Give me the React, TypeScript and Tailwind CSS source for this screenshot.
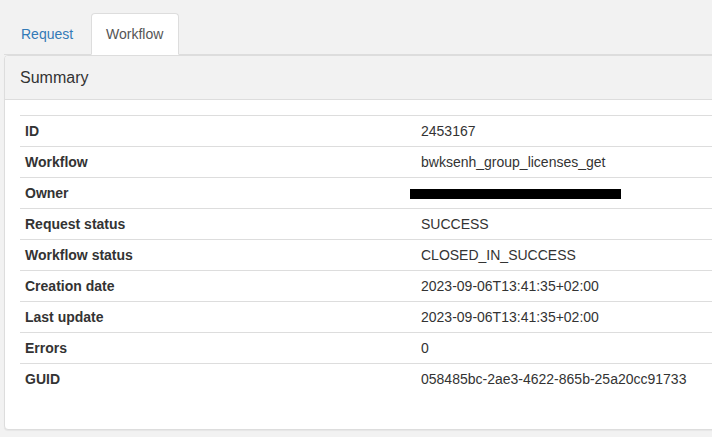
import React from "react";

const rows: { label: string; value: string; redacted?: boolean }[] = [
  { label: "ID", value: "2453167" },
  { label: "Workflow", value: "bwksenh_group_licenses_get" },
  { label: "Owner", value: "", redacted: true },
  { label: "Request status", value: "SUCCESS" },
  { label: "Workflow status", value: "CLOSED_IN_SUCCESS" },
  { label: "Creation date", value: "2023-09-06T13:41:35+02:00" },
  { label: "Last update", value: "2023-09-06T13:41:35+02:00" },
  { label: "Errors", value: "0" },
  { label: "GUID", value: "058485bc-2ae3-4622-865b-25a20cc91733" },
];

export default function App() {
  return (
    <div
      className="w-[712px] h-[437px] overflow-hidden bg-[#f2f2f2] text-[#333] text-[14px]"
      style={{ fontFamily: '"Liberation Sans", Arial, sans-serif' }}
    >
      <div className="w-[840px] pl-[4px] pt-[13px]">
        <ul className="flex border-b border-[#ddd] pl-[1px]">
          <li className="-mb-px mr-[2px]">
            <a className="block w-[84px] px-[15px] py-[10px] leading-[20px] border border-transparent text-[#337ab7]">
              Request
            </a>
          </li>
          <li className="-mb-px">
            <a className="block w-[88px] px-[14px] py-[10px] leading-[20px] border border-[#ddd] border-b-white bg-white rounded-t-[4px] text-[#555]">
              Workflow
            </a>
          </li>
        </ul>
        <div className="border border-[#ddd] rounded-[4px] bg-white shadow-[0_1px_1px_rgba(0,0,0,0.05)]">
          <div className="bg-[#f2f2f2] px-[15px] py-[10px] border-b border-[#ddd] rounded-t-[3px] text-[16px] leading-[23px]">
            Summary
          </div>
          <div className="p-[15px]">
            <table className="w-full border-collapse mb-[20px] table-fixed">
              <colgroup>
                <col className="w-[396px]" />
                <col />
              </colgroup>
              <tbody>
                {rows.map((r) => (
                  <tr key={r.label} className="border-t border-[#ddd]">
                    <td className="px-[5px] py-[5px] leading-[20px] font-bold">{r.label}</td>
                    <td className="px-[5px] py-[5px] leading-[20px]">
                      {r.redacted ? (
                        <div className="relative h-[20px]">
                          <span className="absolute left-[-11px] top-[6px] w-[211px] h-[10px] bg-black" />
                        </div>
                      ) : (
                        r.value
                      )}
                    </td>
                  </tr>
                ))}
              </tbody>
            </table>
          </div>
        </div>
      </div>
    </div>
  );
}
